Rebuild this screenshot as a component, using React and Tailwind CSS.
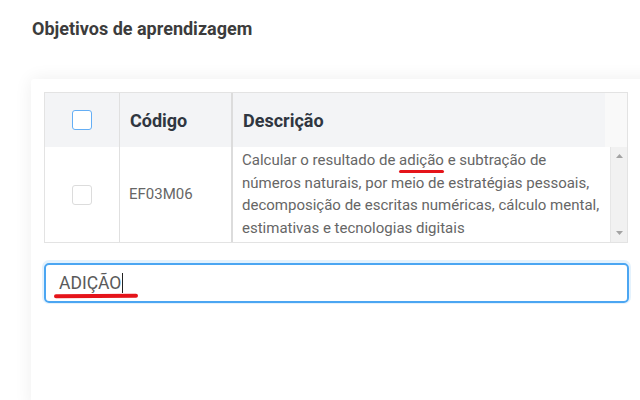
export default function App() {
  const font = { fontFamily: 'Roboto, "Liberation Sans", sans-serif' };

  return (
    <div className="w-[640px] h-[400px] overflow-hidden bg-white" style={font}>
      <div className="pl-[32px] pt-[18px]">
        <h2 className="text-[18px] leading-[22px] font-bold text-[#3c3c3c]">Objetivos de aprendizagem</h2>
      </div>

      <div className="ml-[31px] mt-[39px] w-[640px] h-[330px] bg-white rounded-tl-[3px] shadow-[0_0_18px_rgba(0,0,0,0.07)] pl-[13px] pt-[13px]">
        {/* table */}
        <div className="w-[584px] border border-[#e3e3e3]">
          <div className="flex h-[54px]">
            <div className="w-[75px] bg-[#f3f4f6] border-r border-[#e0e0e0] flex items-center justify-center">
              <span className="w-[20px] h-[20px] rounded-[3px] border border-[#64aef5] bg-white" />
            </div>
            <div className="w-[113px] bg-[#f3f4f6] border-r-2 border-[#dcdcdc] flex items-center pl-[10px] text-[18px] font-bold text-[#2f3640]">
              Código
            </div>
            <div className="w-[372px] bg-[#f3f4f6] flex items-center pl-[10px] text-[18px] font-bold text-[#2f3640]">
              Descrição
            </div>
            <div className="flex-1 bg-[#f9f9f9]" />
          </div>
          <div className="flex h-[95px]">
            <div className="w-[75px] border-r border-[#e0e0e0] flex items-center justify-center">
              <span className="w-[20px] h-[20px] rounded-[3px] border border-[#dcdcdc] bg-white" />
            </div>
            <div className="w-[113px] border-r-2 border-[#dcdcdc] flex items-center pl-[9px] text-[15px] text-[#666]">
              EF03M06
            </div>
            <div className="w-[377px] pl-[9px] pt-[2px] text-[15px] leading-[22.5px] text-[#666] whitespace-nowrap">
              Calcular o resultado de <span className="relative">adição<span className="absolute left-0 right-0 top-[19px] h-[3px] rounded-full bg-[#e5141a]" /></span> e subtração de
              <br />
              números naturais, por meio de estratégias pessoais,
              <br />
              decomposição de escritas numéricas, cálculo mental,
              <br />
              estimativas e tecnologias digitais
            </div>
            <div className="flex-1 bg-[#f1f1f1] border-l border-[#e6e6e6] flex flex-col items-center justify-between py-[7px]">
              <svg width="7" height="4" viewBox="0 0 7 4"><path d="M0 4L3.5 0L7 4Z" fill="#a3a3a3" /></svg>
              <svg width="7" height="4" viewBox="0 0 7 4"><path d="M0 0L3.5 4L7 0Z" fill="#a3a3a3" /></svg>
            </div>
          </div>
        </div>

        {/* search input */}
        <div className="mt-[20px] w-[585px] h-[40px] rounded-[5px] border-2 border-[#4ba6f2] shadow-[0_-1px_0_2px_rgba(75,166,242,0.15)] flex items-center pl-[13px] relative">
          <span className="text-[17.5px] text-[#5a5a5a]">ADIÇÃO</span>
          <span className="w-px h-[20px] bg-[#222] ml-[1px]" />
          <span className="absolute left-[8px] top-[29px] w-[84px] h-[4px] rounded-full bg-[#e5141a] -rotate-[0.5deg]" />
        </div>
      </div>
    </div>
  );
}
